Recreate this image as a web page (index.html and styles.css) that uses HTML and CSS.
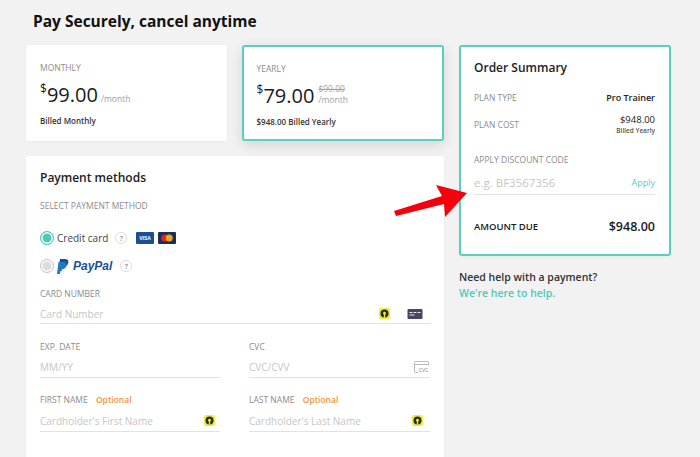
FILE: index.html
```html
<!DOCTYPE html>
<html lang="en">
<head>
  <meta charset="UTF-8">
  <title>Pay Securely</title>
  <link rel="stylesheet" href="styles.css">
</head>
<body>
  <svg class="defs" width="0" height="0">
    <symbol id="autofill" viewBox="0 0 11 11">
      <rect width="11" height="11" rx="2" fill="#ecec3a"/>
      <circle cx="5.5" cy="5.5" r="4" fill="#2b2b2b"/>
      <circle cx="5.5" cy="5.2" r="1.4" fill="#ecec3a"/>
      <rect x="4.8" y="5.2" width="1.4" height="4.6" fill="#ecec3a"/>
    </symbol>
  </svg>

  <h1>Pay Securely, cancel anytime</h1>

  <div class="layout">
    <div class="main">
      <div class="plans">
        <div class="card plan">
          <div class="label">MONTHLY</div>
          <div class="price-row">
            <span class="price"><sup>$</sup>99.00</span>
            <span class="per">/month</span>
          </div>
          <div class="billed">Billed Monthly</div>
        </div>
        <div class="card plan selected">
          <div class="label">YEARLY</div>
          <div class="price-row">
            <span class="price"><sup>$</sup>79.00</span>
            <span class="per stacked"><s>$99.00</s><span>/month</span></span>
          </div>
          <div class="billed">$948.00 Billed Yearly</div>
        </div>
      </div>

      <div class="card payment">
        <h2>Payment methods</h2>
        <div class="label">SELECT PAYMENT METHOD</div>

        <div class="method first">
          <span class="radio on"></span>
          <span class="method-name">Credit card</span>
          <span class="help">?</span>
          <svg class="brand visa" width="18" height="12" viewBox="0 0 18 12">
            <rect width="18" height="12" rx="1" fill="#1a4f96"/>
            <text x="9" y="8.2" text-anchor="middle" font-size="5" font-weight="700" font-family="Liberation Sans" fill="#fff">VISA</text>
          </svg>
          <svg class="brand" width="18" height="12" viewBox="0 0 18 12">
            <rect width="18" height="12" rx="1" fill="#17305f"/>
            <circle cx="6.8" cy="6" r="3.5" fill="#e2231a"/>
            <circle cx="11.2" cy="6" r="3.5" fill="#f6a21c"/>
          </svg>
        </div>

        <div class="method">
          <span class="radio"></span>
          <svg class="pp-mark" width="12" height="15" viewBox="0 0 12 15">
            <path d="M3 0h5c2.6 0 3.8 1.5 3.3 3.8-.6 2.6-2.4 3.8-4.8 3.8H5.300L4.500 12H1z" fill="#1a4f96"/>
            <path d="M1.500 3h4.800c2.400 0 3.700 1.400 3.200 3.600-.5 2.500-2.300 3.700-4.600 3.700H3.800L3 15H0z" fill="#1f78c9"/>
          </svg>
          <span class="pp-name">PayPal</span>
          <span class="help">?</span>
        </div>

        <div class="field card-number">
          <div class="label">CARD NUMBER</div>
          <div class="input">
            <span class="hint">Card Number</span>
            <svg class="autofill" width="11" height="11"><use href="#autofill"/></svg>
            <svg class="card-icon" width="16" height="10" viewBox="0 0 15 10">
              <rect width="15" height="10" rx="1" fill="#45475f"/>
              <path d="M2 3.500h3M6 3.500h3M10 3.500h3M2 6h5" stroke="#e8e8ee" stroke-width="1"/>
            </svg>
          </div>
        </div>

        <div class="field-row">
          <div class="field">
            <div class="label">EXP. DATE</div>
            <div class="input"><span class="hint">MM/YY</span></div>
          </div>
          <div class="field">
            <div class="label">CVC</div>
            <div class="input">
              <span class="hint">CVC/CVV</span>
              <svg class="cvc-icon" width="15" height="12" viewBox="0 0 15 12">
                <path d="M14.500 4V1.500a1 1 0 0 0-1-1h-12a1 1 0 0 0-1 1v9a1 1 0 0 0 1 1H4M.5 3.500h14" fill="none" stroke="#aaa" stroke-width=".8"/>
                <text x="9.5" y="11" text-anchor="middle" font-size="4.5" font-family="Liberation Sans" fill="#888">CVC</text>
              </svg>
            </div>
          </div>
        </div>

        <div class="field-row names">
          <div class="field">
            <div class="label">FIRST NAME <em>Optional</em></div>
            <div class="input">
              <span class="hint">Cardholder's First Name</span>
              <svg class="autofill first-name" width="11" height="11"><use href="#autofill"/></svg>
            </div>
          </div>
          <div class="field">
            <div class="label">LAST NAME <em>Optional</em></div>
            <div class="input">
              <span class="hint">Cardholder's Last Name</span>
              <svg class="autofill last-name" width="11" height="11"><use href="#autofill"/></svg>
            </div>
          </div>
        </div>
      </div>
    </div>

    <div class="side">
      <div class="card summary">
        <h2>Order Summary</h2>
        <div class="sum-row">
          <span class="label">PLAN TYPE</span>
          <span class="plan-name">Pro Trainer</span>
        </div>
        <div class="sum-row cost">
          <span class="label">PLAN COST</span>
          <span class="cost-value">$948.00<small>Billed Yearly</small></span>
        </div>
        <div class="label discount-label">APPLY DISCOUNT CODE</div>
        <div class="discount">
          <span class="hint">e.g. BF3567356</span>
          <span class="apply">Apply</span>
        </div>
        <div class="due">
          <span>AMOUNT DUE</span>
          <strong>$948.00</strong>
        </div>
      </div>
      <p class="help-text">Need help with a payment?<br><a href="#">We're here to help.</a></p>
    </div>
  </div>

  <svg class="arrow" width="80" height="40" viewBox="0 0 80 40">
    <path d="M1 30 L49 15 L43 4 L74 12 L52 36 L51 23 L3 35z" fill="#f5000b"/>
  </svg>
</body>
</html>
```

FILE: styles.css
```css
html, body { height: 457px; overflow: hidden; }
body {
  margin: 0;
  padding: 0 0 0 26px;
  position: relative;
  background: #f2f2f2;
  color: #1c1c1c;
  font-family: "Open Sans", sans-serif;
  font-size: 10px;
}
.defs { position: absolute; }
h1 { margin: 0; padding: 11px 0 0 7px; height: 45px; box-sizing: border-box; font-size: 15.5px; line-height: 20px; font-weight: 700; color: #111; }
h2 { margin: 0; font-size: 12px; line-height: 18px; font-weight: 600; color: #222; }

.layout { display: flex; gap: 15px; align-items: flex-start; }
.main { width: 418px; }
.side { width: 212px; }

.card { background: #fff; border-radius: 3px; box-sizing: border-box; box-shadow: 0 1px 3px rgba(0,0,0,.04); }
.label { color: #8c8c8c; font-size: 8.5px; line-height: 12px; }

.plans { display: flex; gap: 15px; margin-bottom: 15px; }
.plan { flex: 1; height: 96px; padding: 17px 14px; }
.plan.selected { padding: 16px 13px; border: 2px solid #5ccdbf; box-shadow: 0 4px 14px rgba(0,0,0,.12); }
.price-row { display: flex; align-items: flex-end; gap: 3px; margin-top: 7px; }
.selected .price-row { gap: 4px; }
.price { font-size: 20px; line-height: 28px; color: #1a1a1a; }
.price sup { font-size: 12px; line-height: 0; position: relative; top: -1px; vertical-align: 8px; }
.per { color: #a0a0a0; font-size: 8.5px; line-height: 11px; padding-bottom: 5px; }
.stacked { display: flex; flex-direction: column; }
.billed { margin-top: 6px; font-size: 8px; line-height: 12px; font-weight: 600; color: #333; }

.payment { height: 320px; padding: 13px 14px 0; }
.payment > .label { margin-top: 13px; }
.method { display: flex; align-items: center; height: 16px; margin-top: 12px; }
.method.first { margin-top: 18px; }
.radio { width: 12px; height: 12px; border-radius: 50%; background: #dcdcdc; border: 1px solid #c8c8c8; box-shadow: inset 0 0 0 1.5px #fff; margin-right: 3px; }
.radio.on { background: #4fc9b8; border-color: #4fc9b8; }
.method-name { font-size: 10px; color: #444; }
.help { display: inline-flex; align-items: center; justify-content: center; width: 10px; height: 10px; border: 1px solid #ddd; border-radius: 50%; font-size: 7px; color: #666; margin: 0 9px 0 7px; }
.brand { margin-right: 4px; }
.pp-mark { margin-right: 4px; }
.pp-name { font-family: "Liberation Sans", sans-serif; font-size: 12px; font-weight: 700; font-style: italic; color: #1a4f96; margin-right: 1px; }

.field .input { display: flex; align-items: center; height: 20px; border-bottom: 1px solid #e2e2e2; margin-top: 4px; }
.hint { flex: 1; color: #c6c6c6; font-size: 10px; }
.card-number { margin-top: 14px; margin-right: -1px; }
.card-number .input { height: 19px; }
.card-icon { margin: 0 8px 0 17px; }
.first-name { margin-right: 5px; }
.last-name { margin-right: 7px; }
.cvc-icon { margin-right: 1px; }
.field-row { display: grid; grid-template-columns: 180px 181px; gap: 29px; margin-top: 17px; }
.names { margin-top: 16px; }
.names .input { height: 21px; }
.label em { font-style: normal; font-weight: 600; color: #ef9440; margin-left: 6px; }

.summary { height: 211px; padding: 12px 14px 0 13px; border: 2px solid #5ccdbf; }
.summary h2 { margin-bottom: 15px; }
.sum-row { display: flex; justify-content: space-between; align-items: center; margin-bottom: 10px; }
.plan-name { font-weight: 600; color: #222; font-size: 9px; line-height: 12px; }
.cost { margin-bottom: 19px; }
.cost-value { display: flex; flex-direction: column; align-items: flex-end; font-size: 9.5px; line-height: 12px; color: #222; }
.cost-value small { font-size: 6.5px; line-height: 9px; font-weight: 600; color: #555; }
.discount { display: flex; align-items: center; justify-content: space-between; height: 23px; margin-top: 5px; border-bottom: 1px solid #e2e2e2; }
.discount .hint { font-size: 11.5px; }
.apply { color: #5ccdbf; font-size: 9px; }
.due { display: flex; align-items: center; justify-content: space-between; margin-top: 23px; font-size: 9.5px; font-weight: 600; }
.due strong { font-size: 12.5px; font-weight: 600; }

.help-text { margin: 14px 0 0; font-size: 10.5px; line-height: 15.5px; font-weight: 600; color: #333; }
.help-text a { color: #4fc9b8; text-decoration: none; }

.arrow { position: absolute; left: 393px; top: 181px; }
```
